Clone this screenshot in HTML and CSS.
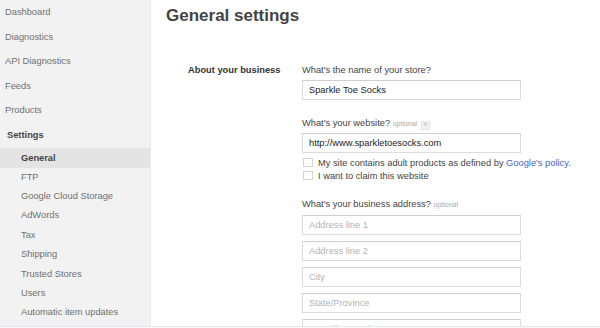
FILE: index.html
```html
<html>
  <head>
    <title>General settings</title>
    <meta name="viewport" content="width=device-width, initial-scale=1.0">
    <link rel="stylesheet" href="styles.css">
  </head>
  <body>
    <div class="page">
      <div class="sidebar">
        <a class="nav">Dashboard</a>
        <a class="nav">Diagnostics</a>
        <a class="nav">API Diagnostics</a>
        <a class="nav">Feeds</a>
        <a class="nav">Products</a>
        <a class="nav nav--open">Settings</a>
        <a class="subnav subnav--active">General</a>
        <a class="subnav">FTP</a>
        <a class="subnav">Google Cloud Storage</a>
        <a class="subnav">AdWords</a>
        <a class="subnav">Tax</a>
        <a class="subnav">Shipping</a>
        <a class="subnav">Trusted Stores</a>
        <a class="subnav">Users</a>
        <a class="subnav">Automatic item updates</a>
      </div>

      <div class="main">
        <h1>General settings</h1>

        <div class="section">
          <div class="section__title">About your business</div>
          <div class="section__fields">
            <div class="field__label">What's the name of your store?</div>
            <input class="text" type="text" value="Sparkle Toe Socks">

            <div class="field__label field__label--gap">
              What's your website? <span class="optional">optional</span>
              <span class="help">?</span>
            </div>
            <input class="text" type="text" value="http://www.sparkletoesocks.com">
            <label class="check">
              <input type="checkbox">
              <span>My site contains adult products as defined by <a class="link">Google's policy.</a></span>
            </label>
            <label class="check">
              <input type="checkbox">
              <span>I want to claim this website</span>
            </label>

            <div class="field__label field__label--address">
              What's your business address? <span class="optional">optional</span>
            </div>
            <div class="address">
              <input class="text text--short" type="text" placeholder="Address line 1">
              <input class="text text--short" type="text" placeholder="Address line 2">
              <input class="text text--short" type="text" placeholder="City">
              <input class="text text--short" type="text" placeholder="State/Province">
              <input class="text text--short" type="text" placeholder="Postal/ZIP code">
            </div>
          </div>
        </div>
      </div>
    </div>
  </body>
</html>
```

FILE: styles.css
```css
body {
  margin: 0;
  background: #f9fafb;
  font-family: "Liberation Sans", Arial, Helvetica, sans-serif;
  font-size: 9.3px;
  color: #333;
  overflow: hidden;
}

.page {
  display: flex;
  height: 326px;
  border-bottom: 1px solid #e3e6ea;
  background: #fff;
  overflow: hidden;
}

.sidebar {
  width: 150px;
  flex: none;
  background: #f2f2f2;
  border-right: 1px solid #eaeaea;
  display: flex;
  flex-direction: column;
}

.nav {
  height: 24.6px;
  line-height: 24.6px;
  padding-left: 5px;
  color: #707070;
}

.nav--open {
  padding-left: 7px;
  font-weight: bold;
  color: #444;
}

.subnav {
  height: 19.4px;
  line-height: 19.4px;
  padding-left: 21px;
  color: #707070;
}

.subnav--active {
  height: 20px;
  line-height: 20px;
  background: #e4e4e4;
  font-weight: bold;
  color: #444;
}

.main {
  flex: 1;
  padding-left: 15px;
}

h1 {
  margin: 6px 0 0;
  font-size: 17px;
  font-weight: bold;
  color: #444;
}

.section {
  display: flex;
  margin-top: 37px;
  padding-left: 22px;
}

.section__title {
  width: 114px;
  flex: none;
  line-height: 14px;
  font-weight: bold;
  color: #333;
}

.section__fields {
  display: flex;
  flex-direction: column;
  width: 300px;
}

.field__label {
  height: 14px;
  line-height: 14px;
  color: #444;
  margin-bottom: 3px;
}

.field__label--gap {
  margin-top: 16px;
}

.field__label--address {
  margin-top: 15px;
  margin-bottom: 4px;
}

.optional {
  font-size: 7px;
  color: #aaa;
}

.help {
  display: inline-block;
  box-sizing: border-box;
  width: 9px;
  height: 9px;
  line-height: 7px;
  margin-left: 1px;
  border: 1px solid #e2e2e2;
  background: #f3f3f3;
  color: #999;
  font-size: 6px;
  text-align: center;
  vertical-align: -1px;
}

.text {
  box-sizing: border-box;
  width: 219px;
  height: 20px;
  margin: 0;
  padding: 0 6px;
  border: 1px solid #dcdcdc;
  border-top-color: #cfcfcf;
  font-family: inherit;
  font-size: 9.3px;
  color: #222;
  outline: none;
}

.text::placeholder {
  color: #b3b3b3;
}

.check {
  display: flex;
  align-items: center;
  gap: 5px;
  height: 13px;
  color: #444;
}

.check:first-of-type {
  margin-top: 3px;
}

.check input {
  appearance: none;
  box-sizing: border-box;
  width: 10px;
  height: 9px;
  margin: 0 0 0 1px;
  border: 1px solid #d4d4d4;
  background: #fff;
}

.link {
  color: #3f63c0;
}

.address {
  display: flex;
  flex-direction: column;
  gap: 6.5px;
}

.text--short {
  height: 19.5px;
}
```
